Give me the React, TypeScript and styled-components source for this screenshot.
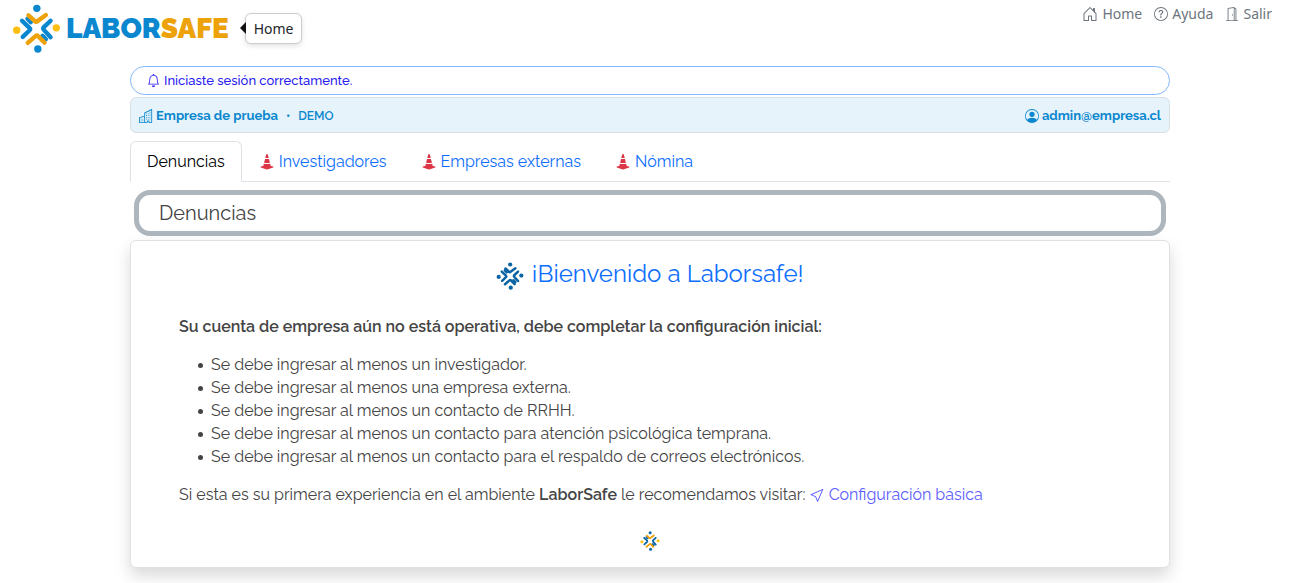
import React from "react";
import styled, { createGlobalStyle } from "styled-components";
import {
  BsBell,
  BsBuildings,
  BsConeStriped,
  BsCursor,
  BsDoorOpen,
  BsHouseDoor,
  BsPersonCircle,
  BsQuestionCircle,
} from "react-icons/bs";

const GlobalStyle = createGlobalStyle`
  *, *::before, *::after { box-sizing: border-box; }
  body {
    margin: 0;
    background: #fff;
    color: #444;
    font-family: Raleway, Lato, sans-serif;
    font-size: 16px;
    line-height: 23px;
  }
  a { text-decoration: none; }
  strong { font-weight: 600; }
  svg { flex: none; }
`;

const TopBar = styled.header`
  display: flex;
  justify-content: space-between;
  align-items: flex-start;
  height: 66px;
  padding: 4px 19px 0 12px;
`;

const Brand = styled.a`
  position: relative;
  display: flex;
  align-items: center;
  gap: 5px;
`;

const Wordmark = styled.span<{ $accent?: boolean }>`
  color: ${(p) => (p.$accent ? "#eda20a" : "#0a87cf")};
  font-family: Raleway, Lato, sans-serif;
  font-size: 28px;
  font-weight: 900;
  line-height: 32px;
`;

const Tooltip = styled.span`
  position: absolute;
  left: 100%;
  top: 9px;
  margin-left: 16px;
  padding: 4px 8px;
  border: 1px solid #ccc;
  border-radius: 6px;
  background: #fff;
  box-shadow: 0 2px 5px rgba(0, 0, 0, 0.12);
  color: #212529;
  font-family: "Noto Sans", sans-serif;
  font-size: 14px;
  line-height: 21px;

  &::before {
    content: "";
    position: absolute;
    left: -6px;
    top: 8px;
    border: solid transparent;
    border-width: 6px 6px 6px 0;
    border-right-color: #111;
  }
`;

const UserNav = styled.nav`
  display: flex;
  gap: 12px;
`;

const UserLink = styled.a`
  display: flex;
  align-items: center;
  gap: 4px;
  color: #6c757d;
  font-family: "Noto Sans", sans-serif;
  font-size: 14px;
  line-height: 20px;
`;

const Page = styled.main`
  padding: 0 0 15px 9px;
`;

const Container = styled.div`
  max-width: 1040px;
  margin: 0 auto;
`;

const Notice = styled.div`
  display: flex;
  align-items: center;
  gap: 4px;
  padding: 3px 16px;
  border: 1px solid #86b7fe;
  border-radius: 32px;
  color: #2a1cf0;
  font-size: 13px;
  font-weight: 500;
  line-height: 21px;
`;

const CompanyBar = styled.div`
  display: flex;
  justify-content: space-between;
  margin-top: 2px;
  padding: 8px 8px 6px;
  border: 1px solid #d8dfe5;
  border-radius: 6px;
  background: #e6f3fa;
  color: #0a87cf;
  font-size: 13px;
  font-weight: 700;
  line-height: 20px;
`;

const CompanyPart = styled.span`
  display: flex;
  align-items: center;
  gap: 3px;
`;

const Plan = styled.span`
  margin-left: 5px;
  font-size: 12px;
  font-weight: 600;
`;

const Tabs = styled.nav`
  display: flex;
  margin-top: 8px;
  border-bottom: 1px solid #dee2e6;
`;

const Tab = styled.a<{ $active?: boolean }>`
  display: flex;
  align-items: center;
  gap: 4px;
  margin-bottom: -1px;
  padding: 8px 16px;
  border: 1px solid transparent;
  border-color: ${(p) => (p.$active ? "#dee2e6 #dee2e6 #fff" : "transparent")};
  border-radius: 6px 6px 0 0;
  color: ${(p) => (p.$active ? "#000" : "#0d6efd")};
  svg { color: #dc3545; }
`;

const Title = styled.h1`
  margin: 8px 4px 4px;
  padding: 6px 20px;
  border: 5px solid #adb5bd;
  border-radius: 16px;
  font-size: 20px;
  font-weight: 400;
  line-height: 24px;
`;

const Card = styled.section`
  padding: 16px 48px;
  border: 1px solid #dee2e6;
  border-radius: 6px;
  background: #fff;
  box-shadow: 0 8px 16px rgba(0, 0, 0, 0.15);
`;

const Welcome = styled.h2`
  display: flex;
  justify-content: center;
  align-items: center;
  gap: 7px;
  margin: 0 0 24px;
  color: #0d6efd;
  font-size: 24px;
  font-weight: 400;
  line-height: 34px;

  svg { margin-top: 3px; }
`;

const Paragraph = styled.p`
  margin: 0 0 15px;
`;

const Steps = styled.ul`
  margin: 0 0 15px;
  padding-left: 19px;
  list-style: none;
`;

const Step = styled.li`
  display: flex;
  align-items: center;
  gap: 8px;

  &::before {
    content: "";
    flex: none;
    width: 5px;
    height: 5px;
    margin-top: 2px;
    border-radius: 50%;
    background: currentColor;
  }
`;

const GuideLink = styled.a`
  color: #5c5cff;
  svg { vertical-align: -2px; }
`;

const CardFoot = styled.div`
  display: flex;
  justify-content: center;
  padding: 10px 0 0;
`;

type MarkProps = { size: number; dots: string; sideDots: string; arms: string; sides: string };

function Mark({ size, dots, sideDots, arms, sides }: MarkProps) {
  return (
    <svg width={size} height={size} viewBox="6 6 146 146" fill="none" strokeWidth="13" strokeLinecap="round" strokeLinejoin="round" aria-hidden="true">
      <g stroke={sides}>
        <path d="M36 56 58 77Q62 81 58 85L38 104M52 50 62 60" />
        <path d="M121 56 101 75Q97 79 101 83L121 105M107 111 97 101" />
      </g>
      <g stroke={arms}>
        <path d="M55 40 74 57Q78 61 82 57L107 39" />
        <path d="M103 121 84 102Q80 98 76 102L53 122" />
      </g>
      <circle cx="80" cy="19" r="11" fill={dots} />
      <circle cx="83" cy="140" r="11" fill={dots} />
      <circle cx="20" cy="84" r="11" fill={sideDots} />
      <circle cx="138" cy="77" r="11" fill={sideDots} />
    </svg>
  );
}

const pendingTabs = ["Investigadores", "Empresas externas", "Nómina"];

const steps = [
  "Se debe ingresar al menos un investigador.",
  "Se debe ingresar al menos una empresa externa.",
  "Se debe ingresar al menos un contacto de RRHH.",
  "Se debe ingresar al menos un contacto para atención psicológica temprana.",
  "Se debe ingresar al menos un contacto para el respaldo de correos electrónicos.",
];

export default function App() {
  return (
    <>
      <GlobalStyle />
      <TopBar>
        <Brand href="#">
          <Mark size={49} dots="#0a87cf" sideDots="#fdc010" arms="#eda20a" sides="#0a87cf" />
          <span>
            <Wordmark>LABOR</Wordmark>
            <Wordmark $accent>SAFE</Wordmark>
          </span>
          <Tooltip role="tooltip">Home</Tooltip>
        </Brand>
        <UserNav>
          <UserLink href="#"><BsHouseDoor size={16} />Home</UserLink>
          <UserLink href="#"><BsQuestionCircle size={14} />Ayuda</UserLink>
          <UserLink href="#"><BsDoorOpen size={14} />Salir</UserLink>
        </UserNav>
      </TopBar>
      <Page>
        <Container>
          <Notice role="status"><BsBell size={13} />Iniciaste sesión correctamente.</Notice>
          <CompanyBar>
            <CompanyPart>
              <BsBuildings size={14} />Empresa de prueba <Plan>•</Plan> <Plan>DEMO</Plan>
            </CompanyPart>
            <CompanyPart><BsPersonCircle size={14} />admin@empresa.cl</CompanyPart>
          </CompanyBar>
          <Tabs>
            <Tab href="#" $active>Denuncias</Tab>
            {pendingTabs.map((name) => (
              <Tab href="#" key={name}><BsConeStriped size={16} />{name}</Tab>
            ))}
          </Tabs>
          <Title>Denuncias</Title>
          <Card>
            <Welcome>
              <Mark size={28} dots="#0a64a4" sideDots="#0a64a4" arms="#0a64a4" sides="#0a64a4" />
              ¡Bienvenido a Laborsafe!
            </Welcome>
            <Paragraph>
              <strong>Su cuenta de empresa aún no está operativa, debe completar la configuración inicial:</strong>
            </Paragraph>
            <Steps>
              {steps.map((step) => <Step key={step}>{step}</Step>)}
            </Steps>
            <Paragraph>
              Si esta es su primera experiencia en el ambiente <strong>LaborSafe</strong> le recomendamos visitar:{" "}
              <GuideLink href="#"><BsCursor size={15} /> Configuración básica</GuideLink>
            </Paragraph>
            <CardFoot>
              <Mark size={20} dots="#0a64a4" sideDots="#fdc010" arms="#eda20a" sides="#0a64a4" />
            </CardFoot>
          </Card>
        </Container>
      </Page>
    </>
  );
}
